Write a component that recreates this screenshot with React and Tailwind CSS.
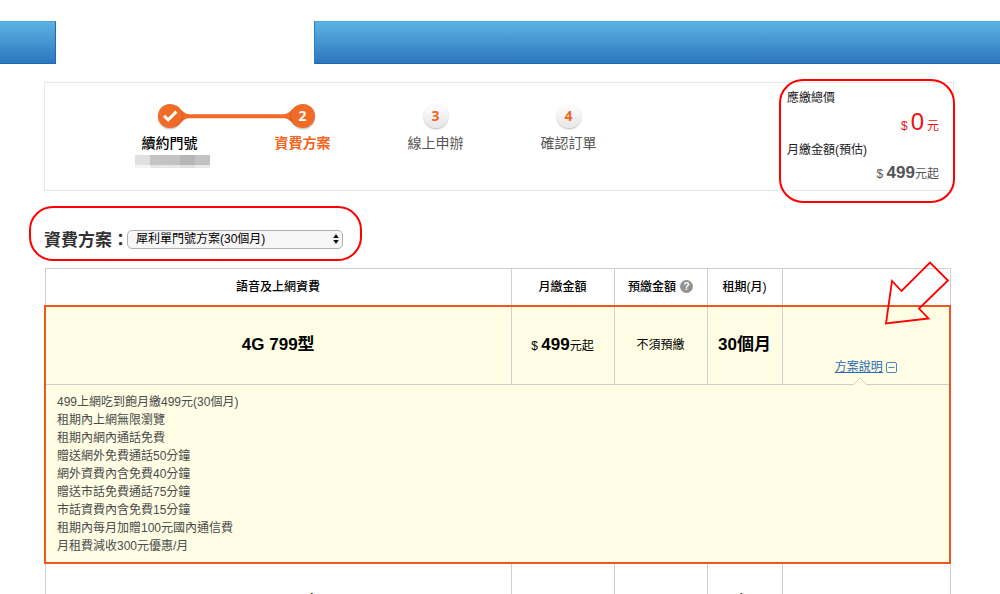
import React from "react";

const details = [
  "499上網吃到飽月繳499元(30個月)",
  "租期內上網無限瀏覽",
  "租期內網內通話免費",
  "贈送網外免費通話50分鐘",
  "網外資費內含免費40分鐘",
  "贈送市話免費通話75分鐘",
  "市話資費內含免費15分鐘",
  "租期內每月加贈100元國內通信費",
  "月租費減收300元優惠/月",
];

const steps = [
  { n: 1, label: "續約門號", state: "done" },
  { n: 2, label: "資費方案", state: "current" },
  { n: 3, label: "線上申辦", state: "todo" },
  { n: 4, label: "確認訂單", state: "todo" },
];

const labelStyle = {
  done: "font-medium text-black",
  current: "font-bold text-[#f26522]",
  todo: "text-[#555555]",
};

function TopBar() {
  return (
    <header className="mt-[21px] flex h-[43px] shrink-0">
      <div className="w-14 border border-l-0 border-t-[#4aa5d8] border-r-[#1f69b4] border-b-[#1f69b4] bg-linear-to-b from-[#5cb4e2] to-[#2d76bd]" />
      <div className="w-[258px]" />
      <div className="flex-1 border border-r-0 border-t-[#4aa5d8] border-l-[#2f7fc2] border-b-[#1f69b4] bg-linear-to-b from-[#5cb4e2] to-[#2d76bd]" />
    </header>
  );
}

function Badge({ step }) {
  if (step.state === "todo") {
    return (
      <span className="flex size-6 items-center justify-center rounded-full bg-linear-to-b from-white to-[#e6e6e6] font-['Open_Sans',sans-serif] text-sm leading-6 font-bold text-[#f26522] shadow-[0_1px_2px_rgba(0,0,0,0.3)]">
        {step.n}
      </span>
    );
  }
  return (
    <span className="relative flex size-6 items-center justify-center rounded-full bg-[#f06a28] font-['Open_Sans',sans-serif] text-sm leading-6 font-bold text-white shadow-[0_1px_2px_rgba(0,0,0,0.3)]">
      {step.state === "done" ? (
        <svg viewBox="0 0 24 24" className="size-6" fill="none" stroke="#fff" strokeWidth="3" aria-hidden="true">
          <path d="M6 11.8 10.2 15.8 18.3 7.6" />
        </svg>
      ) : (
        step.n
      )}
    </span>
  );
}

function MaskedNumber() {
  return (
    <div className="mt-px ml-1.5 flex h-[13px] w-[75px]" aria-hidden="true">
      <i className="flex-1 border-b-3 border-[#f4f4f4] bg-[#e0e0de]" />
      <i className="flex-1 border-b-3 border-[#e6e6e6] bg-[#c4c4c4]" />
      <i className="flex-1 border-b-3 border-[#e6e6e6] bg-[#c3c3c3]" />
      <i className="flex-1 border-b-3 border-[#e0e0e0] bg-[#b7b7b7]" />
      <i className="flex-1 border-b-3 border-[#e8e8e8] bg-[#c2c2c2]" />
    </div>
  );
}

function Steps() {
  return (
    <ol className="ml-[58px] flex pt-[21px]">
      {steps.map((s) => (
        <li key={s.n} className="relative flex w-[133px] flex-col items-center">
          {s.state === "done" && (
            <svg viewBox="0 0 133 24" className="absolute top-0 left-1/2 h-6 w-[133px]" aria-hidden="true">
              <path
                d="M6 1.500C11 4 13 10 19 10.200H114C120 10 122 4 127 1.500V22.500C122 20 120 14.500 114 14.300H19C13 14.500 11 20 6 22.500Z"
                fill="#f06a28"
              />
            </svg>
          )}
          <Badge step={s} />
          <span className={`mt-1 text-sm leading-[22px] ${labelStyle[s.state]}`}>{s.label}</span>
          {s.state === "done" && <MaskedNumber />}
        </li>
      ))}
    </ol>
  );
}

function Summary() {
  return (
    <dl className="relative mr-[14px] flex w-[152px] flex-col pt-[6px] text-xs leading-[18px] text-[#222222]">
      <div className="pointer-events-none absolute -top-[4px] -right-4 -left-2 h-[124px] rounded-[24px] border-2 border-[#ff0000]" />
      <dt>應繳總價</dt>
      <dd className="flex h-[34px] items-baseline justify-end gap-[3px] leading-[30px] text-[#ee1111]">
        <span>$</span>
        <span className="text-2xl leading-[30px]">0</span>
        <span>元</span>
      </dd>
      <dt>月繳金額(預估)</dt>
      <dd className="text-right leading-7 text-[#555555]">
        $ <b className="text-[17px]">499</b>元起
      </dd>
    </dl>
  );
}

function PlanPicker() {
  return (
    <div className="relative mt-[38px] flex h-[20px] w-[318px] items-center">
      <div className="pointer-events-none absolute -top-[23px] -left-[15px] h-[55px] w-[333px] rounded-[24px] border-2 border-[#ff0000]" />
      <label htmlFor="plan" className="w-[83px] pt-1 text-[17px] leading-6 font-bold whitespace-nowrap text-[#333333]">
        資費方案：
      </label>
      <div className="relative">
        <select
          id="plan"
          className="block h-[19px] w-[216px] appearance-none rounded-[5px] border border-[#b0b0b0] bg-[#f6f6f6] pr-5 pl-2 text-xs leading-4 text-black"
        >
          <option>犀利單門號方案(30個月)</option>
        </select>
        <svg viewBox="0 0 6 10" className="pointer-events-none absolute top-1 right-1 h-[10px] w-[6px]" aria-hidden="true">
          <path d="M3 0 5.800 4H.2ZM3 10 .2 6H5.800Z" fill="#111" />
        </svg>
      </div>
    </div>
  );
}

const cell = "border border-[#cfcfcf] p-0 text-center";

function PlanTable() {
  return (
    <table className="mt-[19px] w-full table-fixed border-collapse text-xs text-black">
      <colgroup>
        <col />
        <col className="w-[103px]" />
        <col className="w-[93px]" />
        <col className="w-[75px]" />
        <col className="w-[168px]" />
      </colgroup>
      <thead>
        <tr className="h-[37px]">
          <th className={`${cell} font-medium`}>語音及上網資費</th>
          <th className={`${cell} font-medium`}>月繳金額</th>
          <th className={`${cell} font-medium`}>
            <span className="flex items-center justify-center gap-1">
              預繳金額
              <button
                type="button"
                aria-label="說明"
                className="size-[13px] rounded-full bg-[#929292] font-['Liberation_Sans',sans-serif] text-[10px] leading-[13px] font-bold text-white"
              >
                ?
              </button>
            </span>
          </th>
          <th className={`${cell} font-medium`}>租期(月)</th>
          <th className={cell} />
        </tr>
      </thead>
      <tbody className="border-2 border-[#f0561c] bg-[#fffee5]">
        <tr className="h-[79px]">
          <td className={`${cell} text-[17px] font-bold`}>4G 799型</td>
          <td className={cell}>
            $ <b className="text-[17px]">499</b>元起
          </td>
          <td className={cell}>不須預繳</td>
          <td className={`${cell} text-[17px] font-bold`}>30個月</td>
          <td className={`${cell} relative align-bottom`}>
            <a href="#details" className="mb-[9px] inline-flex items-center gap-[3px] text-[#2a68b5]">
              <span className="underline">方案說明</span>
              <svg viewBox="0 0 11 11" className="size-[11px]" fill="none" stroke="#4a86c5" aria-hidden="true">
                <rect x=".5" y=".5" width="10" height="10" rx="1.500" />
                <path d="M2.500 5.500h6" />
              </svg>
            </a>
            <svg viewBox="0 0 14 8" className="absolute -bottom-px left-[70px] h-2 w-[14px]" aria-hidden="true">
              <path d="M0 8 7 1 14 8" fill="#fffee5" stroke="#cfcfcf" />
            </svg>
          </td>
        </tr>
        <tr className="h-[178px]">
          <td id="details" colSpan={5} className={`${cell} align-top`}>
            <ul className="pt-2 pl-[11px] text-left leading-[18px] text-[#4a4a4a]">
              {details.map((d) => (
                <li key={d}>{d}</li>
              ))}
            </ul>
          </td>
        </tr>
      </tbody>
      <tbody>
        <tr className="h-[81px]">
          <td className={`${cell} text-[17px] font-bold`}>4G 999型</td>
          <td className={cell}>
            $ <b className="text-[17px]">699</b>元起
          </td>
          <td className={cell}>不須預繳</td>
          <td className={`${cell} text-[17px] font-bold`}>30個月</td>
          <td className={cell} />
        </tr>
      </tbody>
    </table>
  );
}

export default function App() {
  return (
    <div className="flex h-screen flex-col overflow-hidden bg-white font-['Liberation_Sans','Noto_Sans_CJK_TC',sans-serif]">
      <TopBar />
      <main className="mt-[18px] mr-[49px] ml-11">
        <section className="-mr-[3px] flex min-h-[109px] justify-between border border-[#e8e8e8]">
          <Steps />
          <Summary />
        </section>
        <PlanPicker />
        <div className="relative">
          <PlanTable />
          <svg viewBox="0 0 66 66" className="pointer-events-none absolute -top-[8px] right-px size-[66px]" aria-hidden="true">
            <path
              d="M2 63.500 8 21 17.500 31 46 2.500 64 20.500 35 48.500 44.500 58.500Z"
              fill="none"
              stroke="#ff0000"
              strokeWidth="1.800"
            />
          </svg>
        </div>
      </main>
    </div>
  );
}
